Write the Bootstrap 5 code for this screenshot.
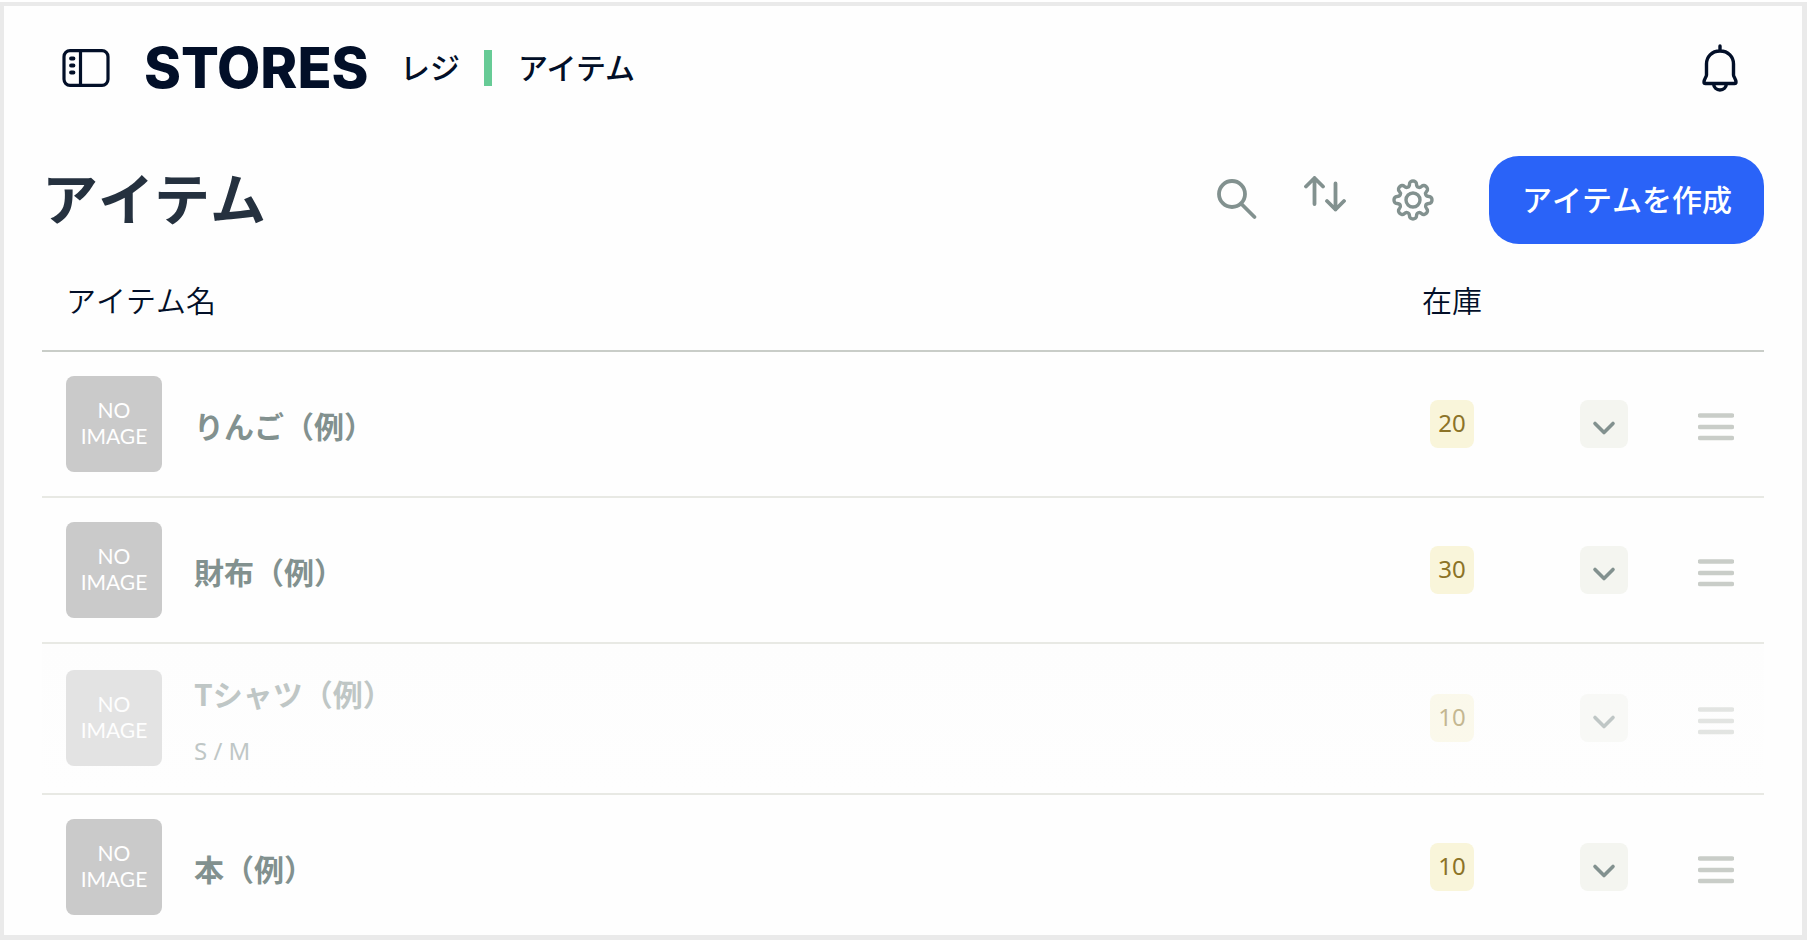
<!DOCTYPE html>
<html lang="ja">
<head>
<meta charset="utf-8">
<meta name="viewport" content="width=device-width, initial-scale=1">
<title>アイテム | STORES レジ</title>
<link href="https://cdn.jsdelivr.net/npm/bootstrap@5.3.0/dist/css/bootstrap.min.css" rel="stylesheet">
<style>
  :root { --ink: #020f28; --muted: #82918f; --rule: #e8e9e4; }
  body { font-family: "Noto Sans", "Noto Sans CJK JP", sans-serif; color: var(--ink); background: #fff; }
  .jp { font-family: "Noto Sans CJK JP", sans-serif; font-size: 30px; line-height: 44px; font-kerning: none; }
  .medium { font-weight: 500; }
  .frame { border: 4px solid #eaeaea; border-width: 4px 5px 5px 4px; margin: 2px 1px 0 0; background: #fefefe; padding: 0 38px; }
  .topbar { height: 124px; padding: 0 26px 0 20px; }
  .icon-btn { background: none; border: 0; padding: 0; line-height: 0; color: var(--muted); }
  .icon-btn.dark { color: var(--ink); }
  .wordmark { font-family: Inter, sans-serif; font-weight: 800; font-size: 56px; line-height: 60px; color: var(--ink); text-decoration: none; min-width: 232px; margin-left: 34px; }
  .service { margin-left: 24px; padding-bottom: 4px; font-kerning: auto; }
  .crumb { padding-bottom: 4px; font-kerning: auto; }
  .divider { width: 8px; height: 36px; background: #67cb96; margin: 0 26px 0 24px; }
  .page-title { font-family: "Noto Sans CJK JP", sans-serif; font-weight: 700; font-size: 56px; line-height: 80px; color: #25313f; font-kerning: none; padding-bottom: 8px; }
  .toolbar { padding-top: 26px; }
  .tools { gap: 46px; margin-right: 55px; }
  .create { height: 88px; padding: 0 32px 4px 33px; border-radius: 30px; background: #2a63f8; border: 0; color: #fff; font-weight: 500; }
  .items { border-collapse: separate; border-spacing: 0; }
  .items th { height: 108px; padding: 4px 0 0; font-weight: 350; border-bottom: 2px solid #c9cdc8; vertical-align: middle; }
  .items td { height: 146px; padding: 0; border-bottom: 2px solid var(--rule); vertical-align: middle; }
  .items .tall td { height: 151px; padding-bottom: 2px; background: linear-gradient(#fdfdfd, #fefefe); }
  .items tbody tr:last-child td { height: 140px; padding-top: 4px; border-bottom: 0; }
  .items .col-stock, .items .col-open { width: 152px; text-align: center; }
  .items .col-drag { width: 84px; text-align: right; padding-right: 30px; }
  .thumb { width: 96px; height: 96px; padding-bottom: 2px; border-radius: 8px; background: #cacaca; color: #fff; font-family: Lato, sans-serif; font-size: 21px; line-height: 26px; }
  .labels { margin-left: 32px; padding-top: 2px; }
  .tall .labels { padding-top: 8px; }
  .item-name { font-weight: 700; color: var(--muted); line-height: 54px; }
  .item-kind { font-size: 24px; line-height: 54px; padding-top: 4px; color: var(--muted); }
  .stock { width: 44px; height: 48px; border-radius: 8px; background: #f9f5da; color: #8c7327; font-size: 24px; line-height: 46px; }
  .open { width: 48px; height: 48px; border-radius: 8px; background: #f4f5f0; }
  .drag { color: #c9cdc8; padding-top: 6px; }
  .tall .cell-in { opacity: .5; }
</style>
</head>
<body>
<svg width="0" height="0" class="d-none" aria-hidden="true">
  <symbol id="chevron" viewBox="0 0 48 48"><path d="M15 23.500l9 9 9-9" fill="none" stroke="currentColor" stroke-width="3.600" stroke-linecap="round" stroke-linejoin="round"/></symbol>
  <symbol id="bars" viewBox="0 0 36 28"><path d="M2 2.500h32M2 14h32M2 25h32" fill="none" stroke="currentColor" stroke-width="4.400" stroke-linecap="round"/></symbol>
</svg>
<div class="frame">
  <header class="topbar d-flex align-items-center">
    <button class="icon-btn dark" type="button" aria-label="メニュー">
      <svg width="48" height="38" viewBox="0 0 48 38" fill="none" stroke="currentColor" stroke-width="3.200"><rect x="2" y="1.700" width="44" height="34.600" rx="6"/><path d="M18.500 1.700v34.600"/><path d="M9 9.500h2.500M9 16.500h2.500M9 23.500h2.500" stroke-width="3.800" stroke-linecap="round"/></svg>
    </button>
    <a class="wordmark" href="#">STORES</a>
    <span class="jp medium service">レジ</span>
    <span class="divider"></span>
    <span class="jp medium crumb">アイテム</span>
    <button class="icon-btn dark ms-auto" type="button" aria-label="お知らせ">
      <svg width="36" height="48" viewBox="0 0 36 48" fill="none" stroke="currentColor" stroke-width="3.400" stroke-linecap="round" stroke-linejoin="round"><path d="M18 2v5M18 7C9.500 7 4.500 13 4.500 20v11c0 2-2.500 4-2.500 7 0 1 .5 1.500 1.500 1.500h29c1 0 1.500-.5 1.500-1.500 0-3-2.500-5-2.500-7V20C31.500 13 26.500 7 18 7zM11.500 40c.5 3.500 3 6 6.500 6s6-2.500 6.500-6"/></svg>
    </button>
  </header>

  <main>
    <div class="toolbar d-flex align-items-center">
      <h1 class="page-title m-0 me-auto">アイテム</h1>
      <div class="d-flex align-items-center tools">
        <button class="icon-btn" type="button" aria-label="検索">
          <svg width="42" height="42" viewBox="0 0 42 42" fill="none" stroke="currentColor" stroke-width="3.800" stroke-linecap="round"><circle cx="16" cy="15" r="13"/><path d="M25.500 25L38.500 38"/></svg>
        </button>
        <button class="icon-btn" type="button" aria-label="並べ替え">
          <svg width="42" height="48" viewBox="0 0 42 48" fill="none" stroke="currentColor" stroke-width="3.800" stroke-linecap="round" stroke-linejoin="round"><path d="M10.500 28V2M2 10.500L10.500 2l8.500 8.500M31.500 7.500v26M23 25l8.500 8.500L40 25"/></svg>
        </button>
        <button class="icon-btn" type="button" aria-label="設定">
          <svg width="42" height="42" viewBox="0 0 42 42" fill="none" stroke="currentColor" stroke-width="3.400" stroke-linejoin="round"><circle cx="21" cy="21" r="7"/><path d="M17.500 5C17.500 1 24.500 1 24.500 5C24.500 8.500 27.500 9.500 29.800 7.300C32.500 4.500 37.500 9.500 34.700 12.200C32.500 14.500 33.500 17.500 37 17.500C41 17.500 41 24.500 37 24.500C33.500 24.500 32.500 27.500 34.700 29.800C37.500 32.500 32.500 37.500 29.800 34.700C27.500 32.500 24.500 33.500 24.500 37C24.500 41 17.500 41 17.500 37C17.500 33.500 14.500 32.500 12.200 34.700C9.500 37.500 4.500 32.500 7.300 29.800C9.500 27.500 8.500 24.500 5 24.500C1 24.500 1 17.500 5 17.500C8.500 17.500 9.500 14.500 7.300 12.200C4.500 9.500 9.500 4.500 12.200 7.300C14.500 9.500 17.500 8.500 17.500 5Z"/></svg>
        </button>
      </div>
      <button class="btn create jp" type="button">アイテムを作成</button>
    </div>

    <table class="items w-100">
      <thead>
        <tr>
          <th class="jp ps-4" scope="col">アイテム名</th>
          <th class="jp col-stock" scope="col">在庫</th>
          <th class="col-open"></th>
          <th class="col-drag"></th>
        </tr>
      </thead>
      <tbody>
        <tr>
          <td class="ps-4"><div class="cell-in d-flex align-items-center"><div class="thumb d-flex align-items-center justify-content-center text-center">NO<br>IMAGE</div><div class="labels"><div class="jp item-name">りんご（例）</div></div></div></td>
          <td class="col-stock"><span class="cell-in stock d-inline-block align-middle">20</span></td>
          <td class="col-open"><button class="cell-in icon-btn open align-middle" type="button" aria-label="開く"><svg width="48" height="48"><use href="#chevron"/></svg></button></td>
          <td class="col-drag"><button class="cell-in icon-btn drag align-middle" type="button" aria-label="並べ替え"><svg width="36" height="28"><use href="#bars"/></svg></button></td>
        </tr>
        <tr>
          <td class="ps-4"><div class="cell-in d-flex align-items-center"><div class="thumb d-flex align-items-center justify-content-center text-center">NO<br>IMAGE</div><div class="labels"><div class="jp item-name">財布（例）</div></div></div></td>
          <td class="col-stock"><span class="cell-in stock d-inline-block align-middle">30</span></td>
          <td class="col-open"><button class="cell-in icon-btn open align-middle" type="button" aria-label="開く"><svg width="48" height="48"><use href="#chevron"/></svg></button></td>
          <td class="col-drag"><button class="cell-in icon-btn drag align-middle" type="button" aria-label="並べ替え"><svg width="36" height="28"><use href="#bars"/></svg></button></td>
        </tr>
        <tr class="tall">
          <td class="ps-4"><div class="cell-in d-flex align-items-center"><div class="thumb d-flex align-items-center justify-content-center text-center">NO<br>IMAGE</div><div class="labels"><div class="jp item-name">Tシャツ（例）</div><div class="item-kind">S / M</div></div></div></td>
          <td class="col-stock"><span class="cell-in stock d-inline-block align-middle">10</span></td>
          <td class="col-open"><button class="cell-in icon-btn open align-middle" type="button" aria-label="開く"><svg width="48" height="48"><use href="#chevron"/></svg></button></td>
          <td class="col-drag"><button class="cell-in icon-btn drag align-middle" type="button" aria-label="並べ替え"><svg width="36" height="28"><use href="#bars"/></svg></button></td>
        </tr>
        <tr>
          <td class="ps-4"><div class="cell-in d-flex align-items-center"><div class="thumb d-flex align-items-center justify-content-center text-center">NO<br>IMAGE</div><div class="labels"><div class="jp item-name">本（例）</div></div></div></td>
          <td class="col-stock"><span class="cell-in stock d-inline-block align-middle">10</span></td>
          <td class="col-open"><button class="cell-in icon-btn open align-middle" type="button" aria-label="開く"><svg width="48" height="48"><use href="#chevron"/></svg></button></td>
          <td class="col-drag"><button class="cell-in icon-btn drag align-middle" type="button" aria-label="並べ替え"><svg width="36" height="28"><use href="#bars"/></svg></button></td>
        </tr>
      </tbody>
    </table>
  </main>
</div>
<script src="https://cdn.jsdelivr.net/npm/bootstrap@5.3.0/dist/js/bootstrap.bundle.min.js"></script>
</body>
</html>
